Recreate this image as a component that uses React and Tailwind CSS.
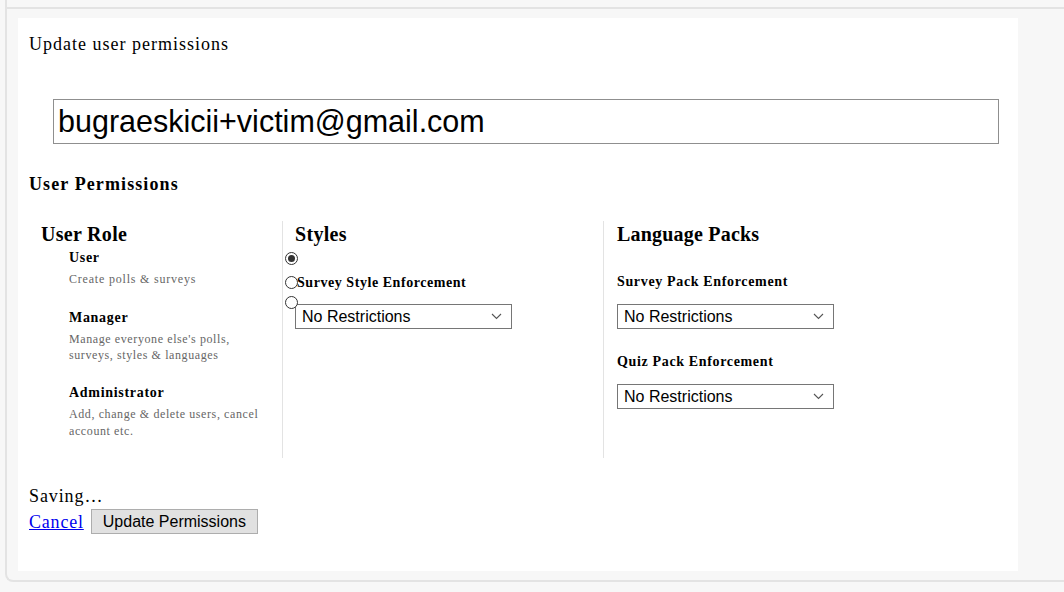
import React from "react";

const serif = { fontFamily: '"Liberation Serif", "Times New Roman", serif' };
const sans = { fontFamily: '"Liberation Sans", Arial, sans-serif' };

function Select() {
  return (
    <div
      className="flex items-center justify-between w-[217px] h-[25px] border border-[#767676] bg-white pl-[6px] pr-[9px] text-[16px] text-black"
      style={sans}
    >
      <span>No Restrictions</span>
      <svg width="11" height="7" viewBox="0 0 11 7" fill="none">
        <path d="M1 1l4.5 4.5L10 1" stroke="#555" strokeWidth="1.1" />
      </svg>
    </div>
  );
}

function Radio({ checked }) {
  return (
    <span className="flex items-center justify-center w-[13px] h-[13px] rounded-full border border-[#333] bg-white shrink-0">
      {checked && <span className="w-[7px] h-[7px] rounded-full bg-[#333]" />}
    </span>
  );
}

export default function App() {
  return (
    <div className="w-[1064px] h-[592px] bg-[#f7f7f7] overflow-hidden" style={serif}>
      <div className="ml-[5px] h-[582px] border-l-2 border-b-2 border-[#e3e3e3] rounded-bl-[8px] flex flex-col">
        <div className="h-[9px] border-b-2 border-[#e3e3e3]" />
        <div className="pl-[11px] pt-[9px]">
          <div className="w-[1000px] h-[553px] bg-white pl-[11px] pt-[15px] text-black">
            <div className="text-[18px] leading-[22px] tracking-[1px]">Update user permissions</div>
            <div className="ml-[24px] mt-[44px] w-[946px] h-[45px] border border-[#8f8f8f] flex items-center pl-[4px]">
              <span className="text-[30.5px] leading-none" style={sans}>bugraeskicii+victim@gmail.com</span>
            </div>
            <div className="mt-[29px] text-[18px] font-bold leading-[22px] tracking-[1.1px]">User Permissions</div>
            <div className="flex mt-[26px]">
              <div className="w-[254px] pl-[12px] border-r border-[#e3e3e3] h-[237px]">
                <div className="text-[20px] font-bold leading-[24px] mt-[1px] tracking-[0.3px]">User Role</div>
                <div className="pl-[28px] mt-[3px]">
                  <div className="mb-[21px]">
                    <div className="text-[14px] font-bold leading-[18px] tracking-[0.7px]">User</div>
                    <div className="text-[12px] leading-[17px] text-[#666] mt-[4px] tracking-[0.8px]">Create polls &amp; surveys</div>
                  </div>
                  <div className="mb-[21px]">
                    <div className="text-[14px] font-bold leading-[18px] tracking-[0.7px]">Manager</div>
                    <div className="text-[12px] leading-[16px] text-[#666] mt-[4px] tracking-[0.6px]">
                      Manage everyone else's polls,
                      <br />
                      surveys, styles &amp; languages
                    </div>
                  </div>
                  <div>
                    <div className="text-[14px] font-bold leading-[18px] tracking-[0.7px]">Administrator</div>
                    <div className="text-[12px] leading-[17px] text-[#666] mt-[4px] tracking-[0.6px]">
                      Add, change &amp; delete users, cancel
                      <br />
                      account etc.
                    </div>
                  </div>
                </div>
              </div>
              <div className="w-[321px] pl-[2px] border-r border-[#e3e3e3] h-[237px]">
                <div className="pl-[10px] text-[20px] font-bold leading-[24px] mt-[1px] tracking-[0.3px]">Styles</div>
                <div className="mt-[6px] flex">
                  <Radio checked />
                </div>
                <div className="flex items-center mt-[11px] h-[13px]">
                  <Radio />
                  <span className="text-[14px] font-bold leading-[18px] -ml-[1px] tracking-[0.55px]">Survey Style Enforcement</span>
                </div>
                <div className="mt-[7px] flex">
                  <Radio />
                </div>
                <div className="-mt-[5px] pl-[10px]">
                  <Select />
                </div>
              </div>
              <div className="pl-[13px]">
                <div className="text-[20px] font-bold leading-[24px] mt-[1px] tracking-[0.2px]">Language Packs</div>
                <div className="text-[14px] font-bold leading-[18px] mt-[27px] tracking-[0.65px]">Survey Pack Enforcement</div>
                <div className="mt-[13px]">
                  <Select />
                </div>
                <div className="text-[14px] font-bold leading-[18px] mt-[24px] tracking-[0.65px]">Quiz Pack Enforcement</div>
                <div className="mt-[13px]">
                  <Select />
                </div>
              </div>
            </div>
            <div className="mt-[27px] text-[18px] leading-[22px] tracking-[0.9px]">Saving…</div>
            <div className="flex items-center mt-[2px]">
              <a href="#" className="text-[18px] leading-[22px] text-[#0000ee] underline tracking-[0.8px]">Cancel</a>
              <button
                className="ml-[7px] h-[25px] px-[11px] bg-[#e1e1e1] border border-[#adadad] text-[16px] text-black leading-none"
                style={sans}
              >
                Update Permissions
              </button>
            </div>
          </div>
        </div>
      </div>
    </div>
  );
}
